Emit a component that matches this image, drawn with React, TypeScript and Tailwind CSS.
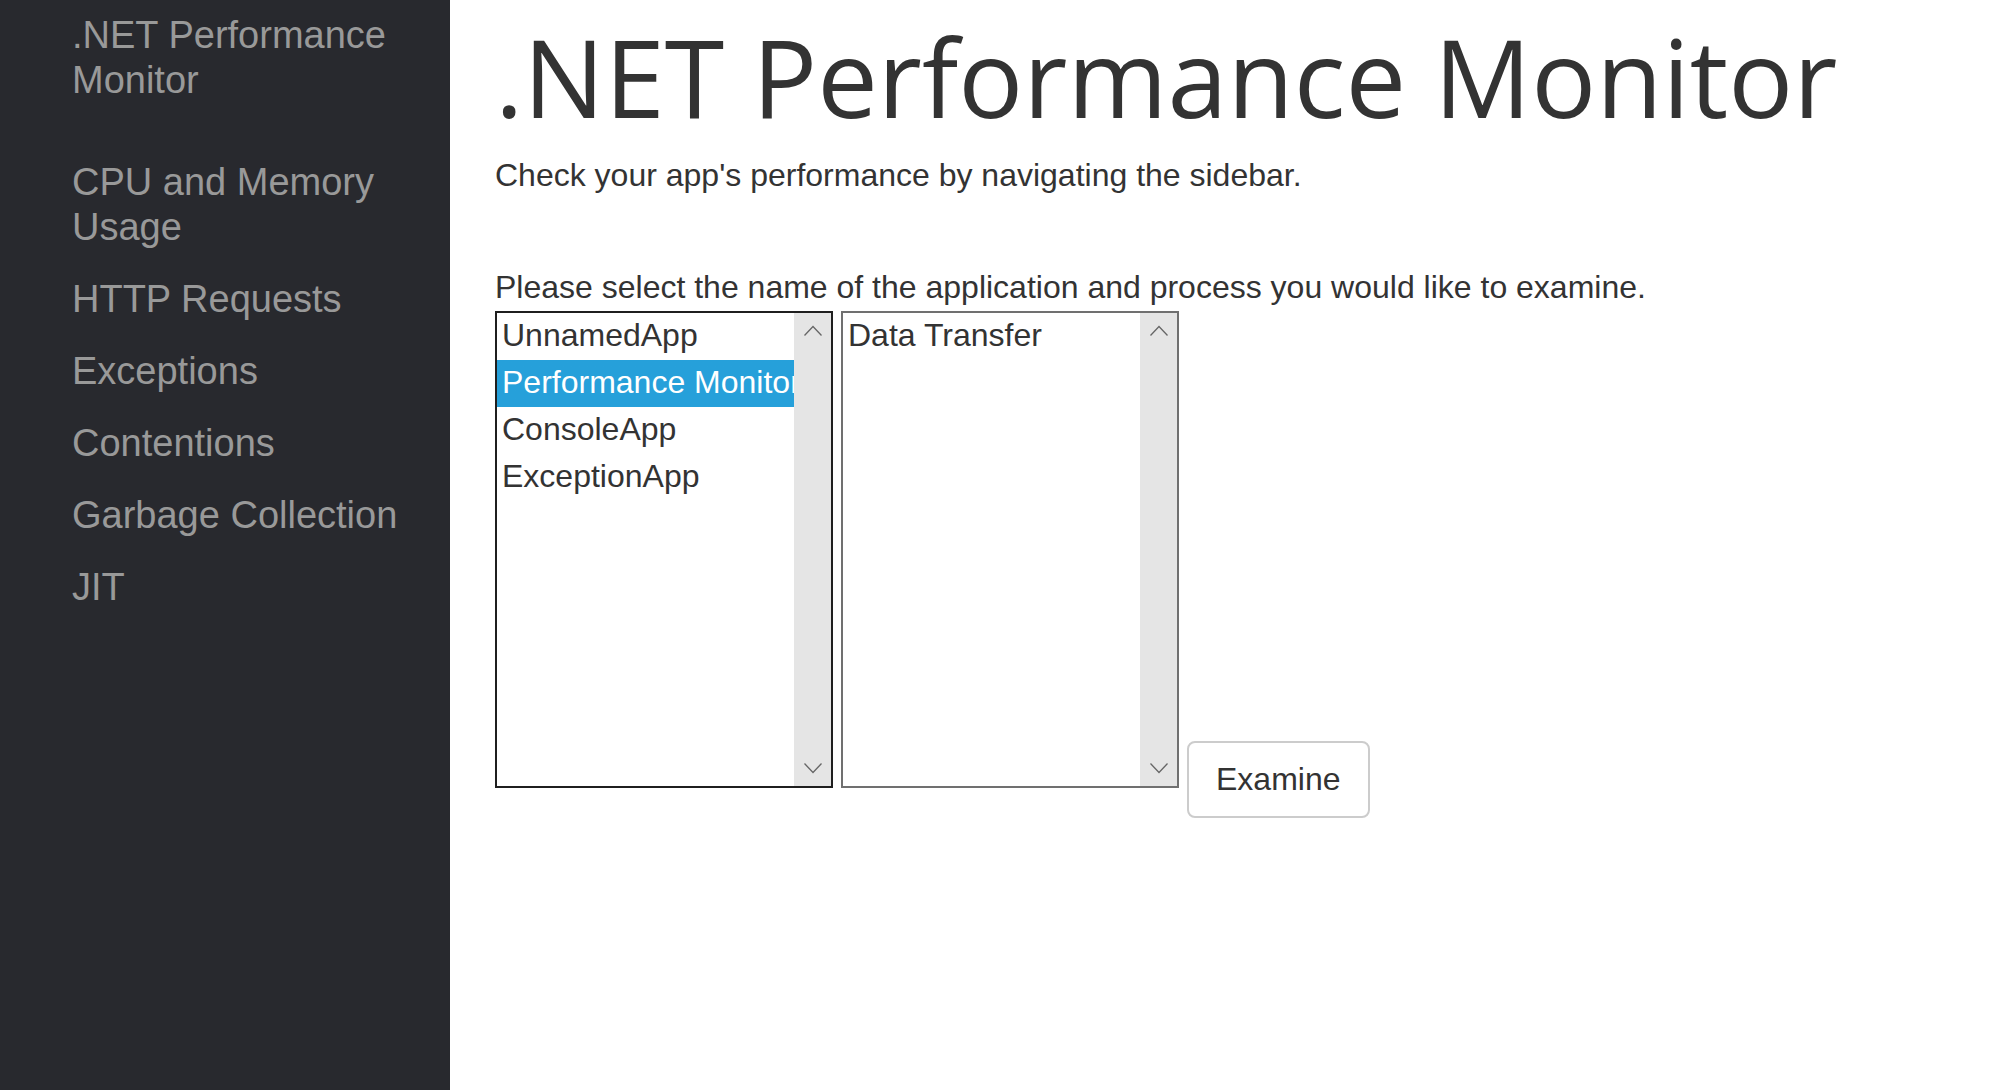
const topics = [
  'CPU and Memory Usage',
  'HTTP Requests',
  'Exceptions',
  'Contentions',
  'Garbage Collection',
  'JIT',
];

function Scrollbar() {
  return (
    <div aria-hidden="true" className="flex w-9 shrink-0 flex-col items-center justify-between bg-[#e5e5e5] py-3">
      <svg width="20" height="12" viewBox="0 0 20 12" fill="none" stroke="#666" strokeWidth="1.3">
        <path d="M1.5 10.5 10 1.5l8.5 9" />
      </svg>
      <svg width="20" height="12" viewBox="0 0 20 12" fill="none" stroke="#666" strokeWidth="1.3">
        <path d="M1.5 1.5 10 10.5l8.5-9" />
      </svg>
    </div>
  );
}

type ListBoxProps = { id: string; label?: string; options: string[]; selected?: string; frame: string };

function ListBox({ id, label, options, selected, frame }: ListBoxProps) {
  return (
    <div className={`mb-[30px] flex h-[477px] w-[338px] border-2 ${frame}`}>
      <div className="flex min-w-0 flex-1 border-r border-[#e5e5e5]">
        <select
          id={id}
          aria-label={label}
          size={10}
          defaultValue={selected}
          className="min-w-0 flex-1 appearance-none overflow-hidden bg-white text-[32px] text-[#333] outline-none"
        >
          {options.map((name) => (
            <option
              key={name}
              value={name}
              className="h-[47px] px-[5px] pt-1 pb-0 checked:bg-linear-to-r checked:from-[#26a0da] checked:to-[#26a0da] checked:[-webkit-text-fill-color:white]"
            >
              {name}
            </option>
          ))}
        </select>
      </div>
      <Scrollbar />
    </div>
  );
}

export default function App() {
  return (
    <div className="flex min-h-screen bg-white font-['Liberation_Sans',Arial,sans-serif] text-[32px] leading-[45px] text-[#333]">
      <nav className="w-[450px] shrink-0 bg-[#28292e] pt-[13px] pr-9 pl-[72px] text-[38px] text-[#999]">
        <a href="#home" className="block">
          .NET Performance Monitor
        </a>
        <ul className="mt-[57px] flex flex-col gap-[27px]">
          {topics.map((topic) => (
            <li key={topic}>
              <a href="#topic" className="block">
                {topic}
              </a>
            </li>
          ))}
        </ul>
      </nav>
      <main className="min-w-0 flex-1 px-[45px] pt-[17px]">
        <h1 className="font-['Open_Sans',sans-serif] text-[108px] leading-[119px]">.NET Performance Monitor</h1>
        <p className="mt-[17px]">Check your app's performance by navigating the sidebar.</p>
        <form className="mt-[67px]" onSubmit={(event) => event.preventDefault()}>
          <label htmlFor="application" className="block">
            Please select the name of the application and process you would like to examine.
          </label>
          <div className="mt-px flex flex-wrap items-end gap-2">
            <ListBox
              id="application"
              options={['UnnamedApp', 'Performance Monitor', 'ConsoleApp', 'ExceptionApp']}
              selected="Performance Monitor"
              frame="border-[#1f1f1f]"
            />
            <ListBox id="process" label="Process" options={['Data Transfer']} frame="border-[#707070]" />
            <button type="submit" className="h-[77px] rounded-lg border-2 border-[#ccc] bg-white px-[27px]">
              Examine
            </button>
          </div>
        </form>
      </main>
    </div>
  );
}
